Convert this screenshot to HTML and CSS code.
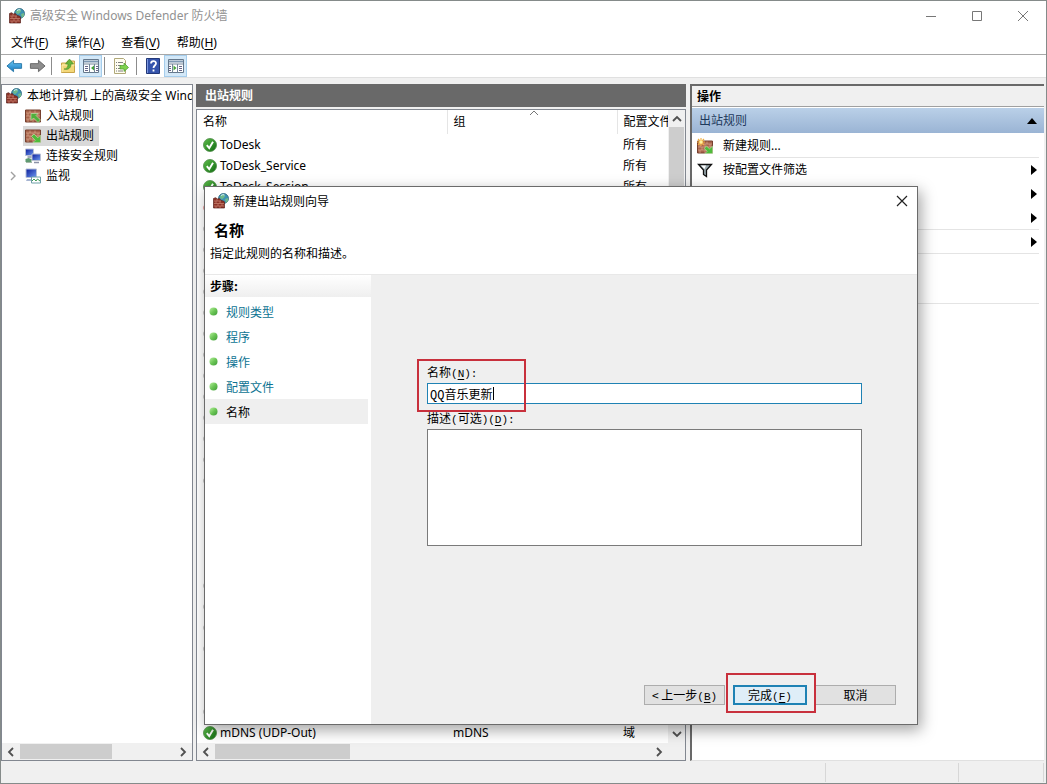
FILE: index.html
```html
<!DOCTYPE html>
<html lang="zh-CN">
<head>
<meta charset="utf-8">
<title>高级安全 Windows Defender 防火墙</title>
<link rel="stylesheet" href="styles.css">
</head>
<body>
<svg class="defs" aria-hidden="true">
  <defs>
    <linearGradient id="gBall" x1="0" y1="0" x2="1" y2="1"><stop offset="0" stop-color="#b8f0a0"/><stop offset=".5" stop-color="#6cc656"/><stop offset="1" stop-color="#3f9a38"/></linearGradient>
    <linearGradient id="gOk" x1="0" y1="0" x2="1" y2="1"><stop offset="0" stop-color="#5fbf4c"/><stop offset="1" stop-color="#0f6a10"/></linearGradient>
    <linearGradient id="gBlue" x1="0" y1="0" x2="0" y2="1"><stop offset="0" stop-color="#6cc8f4"/><stop offset="1" stop-color="#1277c0"/></linearGradient>
    <linearGradient id="gScreen" x1="0" y1="0" x2="1" y2="1"><stop offset="0" stop-color="#0a1a9a"/><stop offset="1" stop-color="#6f9cf0"/></linearGradient>
  </defs>
  <symbol id="fw" viewBox="0 0 16 16">
    <circle cx="10.500" cy="5.500" r="5" fill="#3e93b4" stroke="#2c6478" stroke-width=".8"/>
    <path d="M7 3q2-2 4-1.600l1 2-2.500 2.600-2-.5zM12 6l3-1v3l-2 2z" fill="#6fb98a"/>
    <path d="M8 2.500q2-1.500 3.500-.5" stroke="#d5f2fa" fill="none"/>
    <path d="M.5 5.500l2-.8 2 1.300 2-.4 1.500 1.900 2.500.5 1 1V15H.5z" fill="#8c3227" stroke="#59231c" stroke-width=".7"/>
    <path d="M1 8h7M1 10.500h10M1 13h10M4 6v2M7 8v2.500M3 8v2.500M5 10.500V13M9 10.500V13M3 13v2M7 13v2" stroke="#c98573" stroke-width=".7"/>
  </symbol>
  <symbol id="wall" viewBox="0 0 16 14">
    <path d="M.5 1h15v12H.5z" fill="#a8644c" stroke="#76402f"/>
    <path d="M1 4h14M1 7h14M1 10h14M5 1.500v2.500M10 1.500v2.500M3 4v3M8 4v3M13 4v3M5 7v3M10 7v3M3 10v3M8 10v3" stroke="#d8a88c" stroke-width=".7"/>
  </symbol>
  <symbol id="in" viewBox="0 0 16 14"><use href="#wall"/><path d="M6 4.500h7l-2 2 4.500 4.500-2.500 2.500-4.500-4.500-2.500 2.500z" fill="#4fae3b" stroke="#c9eab6" stroke-width=".6"/></symbol>
  <symbol id="out" viewBox="0 0 16 14"><use href="#wall"/><path d="M15.500 13.500h-7.500l2.200-2.200L6.500 7.500 9 5l3.900 3.800 2.600-2.600z" fill="#4fbb3b" stroke="#c9eab6" stroke-width=".6"/></symbol>
  <symbol id="new" viewBox="0 0 16 16"><use href="#wall" y="2" width="16" height="14"/><path d="M15.500 15.500h-7.500l2.200-2.200-3-2.800L9.500 8l3 2.800 3-2.600z" fill="#4fbb3b" stroke="#c9eab6" stroke-width=".6"/><path d="M4 0v8M0 4h8M1 1l6 6M7 1L1 7" stroke="#f0b040" stroke-width="1.100"/><circle cx="4" cy="4" r="1.700" fill="#fff2a0"/></symbol>
  <symbol id="conn" viewBox="0 0 16 16">
    <path d="M.5 1h8v6.500h-8z" fill="url(#gScreen)" stroke="#b8c0d4"/><path d="M7 6h8.500v6.500H7z" fill="url(#gScreen)" stroke="#b8c0d4"/>
    <path d="M2.500 9h4M9 14.500h5" stroke="#8b92a8" stroke-width="1.500"/><path d="M.5 14v-3l3-1 3 1v3z" fill="#5f9a70"/><path d="M1 14.500h6" stroke="#a3b8a8"/>
  </symbol>
  <symbol id="mon" viewBox="0 0 16 16">
    <path d="M1 1h10.500v8.500H1z" fill="url(#gScreen)" stroke="#b4bfd8"/><path d="M2 11h6v2H1z" fill="#a7b5d2"/>
    <path d="M6.500 9h9v6h-9z" fill="#fff" stroke="#6fa0a8"/><path d="M7 13l2-2 2 2 1.500-2 2.500 2" stroke="#3f9a58" fill="none"/>
  </symbol>
  <symbol id="ok" viewBox="0 0 14 14"><circle cx="7" cy="7" r="6.500" fill="url(#gOk)" stroke="#4d8b46" stroke-width=".8"/><path d="M3.800 7.200l2.400 3 3.800-6.500" fill="none" stroke="#fff" stroke-width="1.900"/></symbol>
  <symbol id="off" viewBox="0 0 14 14"><circle cx="7" cy="7" r="6.500" fill="#8b8b8b"/></symbol>
  <symbol id="block" viewBox="0 0 14 14"><circle cx="7" cy="7" r="6.500" fill="#d23a3a"/></symbol>
  <symbol id="ball" viewBox="0 0 9 9"><circle cx="4.500" cy="4.500" r="4" fill="url(#gBall)"/></symbol>
  <symbol id="l" viewBox="0 0 8 10"><path d="M6 1L2 5l4 4" fill="none" stroke="#505050" stroke-width="1.800"/></symbol>
  <symbol id="r" viewBox="0 0 8 10"><path d="M2 1l4 4-4 4" fill="none" stroke="#505050" stroke-width="1.800"/></symbol>
  <symbol id="u" viewBox="0 0 10 8"><path d="M1 6l4-4 4 4" fill="none" stroke="#505050" stroke-width="1.800"/></symbol>
  <symbol id="d" viewBox="0 0 10 8"><path d="M1 2l4 4 4-4" fill="none" stroke="#505050" stroke-width="1.800"/></symbol>
  <symbol id="tri" viewBox="0 0 6 10"><path d="M0 0l6 5-6 5z" fill="#000"/></symbol>
</svg>

<div class="window">
  <header class="titlebar">
    <svg class="i16"><use href="#fw"/></svg>
    <h1 class="title">高级安全 Windows Defender 防火墙</h1>
    <div class="winbtns">
      <button aria-label="最小化"><svg width="12" height="12"><path d="M1 6.500h10" stroke="#777"/></svg></button>
      <button aria-label="最大化"><svg width="12" height="12"><path d="M1.500 1.500h9v9h-9z" fill="none" stroke="#777"/></svg></button>
      <button aria-label="关闭"><svg width="12" height="12"><path d="M1 1l10 10M11 1L1 11" stroke="#777"/></svg></button>
    </div>
  </header>
  <nav class="menubar">
    <button>文件(<u>F</u>)</button><button>操作(<u>A</u>)</button><button>查看(<u>V</u>)</button><button>帮助(<u>H</u>)</button>
  </nav>
  <div class="toolbar">
    <button aria-label="后退"><svg width="17" height="16" viewBox="0 0 18 16"><path d="M1 8l7-6v3.500h8.500v5H8V14z" fill="url(#gBlue)" stroke="#2878a8"/></svg></button>
    <button aria-label="前进"><svg width="17" height="16" viewBox="0 0 18 16"><path d="M17 8l-7-6v3.500H1.500v5H10V14z" fill="#8d8d8d" stroke="#666"/></svg></button>
    <i class="sep"></i>
    <button aria-label="上一级"><svg width="16" height="16" viewBox="0 0 16 16"><path d="M1.500 5h5l1-2h7v11.500h-13z" fill="#f3d778" stroke="#c8a448"/><path d="M2 14V7h12.500" stroke="#fff0b0" fill="none"/><path d="M4 11c3 0 4-2 4-5H5.500L9.500 1l4 5H11c0 4-3 6.500-7 5z" fill="#68b53c" stroke="#478c26" stroke-width=".6"/></svg></button>
    <button class="on" aria-label="显示控制台树"><svg width="16" height="14" viewBox="0 0 16 14"><path d="M.5.500h15v13H.5z" fill="#fff" stroke="#65788c"/><path d="M1 2.500h14" stroke="#7d98b3" stroke-width="2"/><path d="M1 5h14M6.500 5v8.500M11.500 5v8.500" stroke="#75879a"/><path d="M2 7.500h3M2 9.500h3M2 11.500h3M13 7.500h2M13 9.500h2M13 11.500h2" stroke="#668"/><path d="M11 6.500v5l-3-2.500z" fill="#43a338"/></svg></button>
    <i class="sep"></i>
    <button aria-label="导出列表"><svg width="16" height="16" viewBox="0 0 16 16"><path d="M1.500.500h9l2 2v13h-11z" fill="#fffdf0" stroke="#b0a878"/><path d="M3 4.500h1M3 7.500h1M3 10.500h1M3 13h1M5 4.500h5M5 7.500h3M5 10.500h3M5 13h5" stroke="#808080"/><path d="M7 7.500h4V5l4.500 4.500L11 13.500V11H7z" fill="#7fd24d" stroke="#4a9b2f" stroke-width=".7"/></svg></button>
    <i class="sep wide"></i>
    <button aria-label="帮助"><svg width="14" height="16" viewBox="0 0 14 16"><path d="M.5.500h13v15H.5z" fill="#3554ac" stroke="#223878"/><path d="M1.500 1v14" stroke="#7d98df"/><path d="M5 5.500c0-3.200 5-3.200 5-.2C10 7.500 7.500 7.500 7.500 10M7.500 11.500v2" fill="none" stroke="#fff" stroke-width="1.800"/></svg></button>
    <button class="on" aria-label="显示操作窗格"><svg width="16" height="14" viewBox="0 0 16 14"><path d="M.5.500h15v13H.5z" fill="#fff" stroke="#65788c"/><path d="M1 2.500h14" stroke="#7d98b3" stroke-width="2"/><path d="M1 5h14M4.500 5v8.500M9.500 5v8.500" stroke="#75879a"/><path d="M1 7.500h2M1 9.500h2M1 11.500h2M11 7.500h3M11 9.500h3M11 11.500h3" stroke="#668"/><path d="M5.500 6.500v5l3-2.500z" fill="#43a338"/></svg></button>
  </div>

  <main class="panes">
    <section class="pane tree">
      <ul class="nodes">
        <li class="root"><svg class="i16"><use href="#fw"/></svg><span>本地计算机 上的高级安全 Windows Defender</span></li>
        <li><svg class="i16"><use href="#in"/></svg><span>入站规则</span></li>
        <li class="sel"><svg class="i16"><use href="#out"/></svg><span>出站规则</span></li>
        <li><svg class="i16"><use href="#conn"/></svg><span>连接安全规则</span></li>
        <li class="exp"><svg class="chev" width="6" height="10" viewBox="0 0 6 10"><path d="M1 1l4 4-4 4" fill="none" stroke="#a0a0a0" stroke-width="1.400"/></svg><svg class="i16"><use href="#mon"/></svg><span>监视</span></li>
      </ul>
      <div class="hbar"><svg class="arr"><use href="#l"/></svg><div class="track"><i class="thumb t1"></i></div><svg class="arr"><use href="#r"/></svg></div>
    </section>

    <section class="mid">
      <h2 class="caption">出站规则</h2>
      <div class="pane list">
        <div class="listrow">
          <div class="clip">
            <table>
              <thead><tr><th class="c1">名称</th><th class="c2">组<svg class="sort" width="10" height="6"><path d="M1 5l4-4 4 4" fill="none" stroke="#777"/></svg></th><th class="c3">配置文件</th></tr></thead>
              <tbody>
                <tr><td><svg class="i14"><use href="#ok"/></svg>ToDesk</td><td></td><td>所有</td></tr>
                <tr><td><svg class="i14"><use href="#ok"/></svg>ToDesk_Service</td><td></td><td>所有</td></tr>
                <tr><td><svg class="i14"><use href="#ok"/></svg>ToDesk_Session</td><td></td><td>所有</td></tr>
                <tr><td><svg class="i14"><use href="#block"/></svg></td><td></td><td></td></tr>
                <tr><td><svg class="i14"><use href="#off"/></svg></td><td></td><td></td></tr>
                <tr><td><svg class="i14"><use href="#off"/></svg></td><td></td><td></td></tr>
                <tr><td><svg class="i14"><use href="#off"/></svg></td><td></td><td></td></tr>
                <tr><td><svg class="i14"><use href="#off"/></svg></td><td></td><td></td></tr>
                <tr><td><svg class="i14"><use href="#off"/></svg></td><td></td><td></td></tr>
                <tr><td><svg class="i14"><use href="#off"/></svg></td><td></td><td></td></tr>
                <tr><td><svg class="i14"><use href="#off"/></svg></td><td></td><td></td></tr>
                <tr><td><svg class="i14"><use href="#off"/></svg></td><td></td><td></td></tr>
                <tr><td><svg class="i14"><use href="#off"/></svg></td><td></td><td></td></tr>
                <tr><td><svg class="i14"><use href="#off"/></svg></td><td></td><td></td></tr>
                <tr><td><svg class="i14"><use href="#off"/></svg></td><td></td><td></td></tr>
                <tr><td><svg class="i14"><use href="#off"/></svg></td><td></td><td></td></tr>
                <tr><td><svg class="i14"><use href="#off"/></svg></td><td></td><td></td></tr>
                <tr><td></td><td></td><td></td></tr>
                <tr><td></td><td></td><td></td></tr>
                <tr><td></td><td></td><td></td></tr>
                <tr><td></td><td></td><td></td></tr>
                <tr><td><svg class="i14"><use href="#off"/></svg></td><td></td><td></td></tr>
                <tr><td><svg class="i14"><use href="#off"/></svg></td><td></td><td></td></tr>
                <tr><td><svg class="i14"><use href="#off"/></svg></td><td></td><td></td></tr>
                <tr><td><svg class="i14"><use href="#off"/></svg></td><td></td><td></td></tr>
                <tr><td></td><td></td><td></td></tr>
                <tr><td></td><td></td><td></td></tr>
                <tr><td><svg class="i14"><use href="#off"/></svg></td><td></td><td></td></tr>
                <tr><td><svg class="i14"><use href="#ok"/></svg>mDNS (UDP-Out)</td><td>mDNS</td><td>域</td></tr>
              </tbody>
            </table>
          </div>
          <div class="vbar"><svg class="arrv"><use href="#u"/></svg><i class="vthumb"></i><svg class="arrv"><use href="#d"/></svg></div>
        </div>
        <div class="hbar corner"><svg class="arr"><use href="#l"/></svg><div class="track"><i class="thumb t2"></i></div><svg class="arr"><use href="#r"/></svg></div>
      </div>
    </section>

    <aside class="actions">
      <h2 class="ahead">操作</h2>
      <div class="agroup"><span>出站规则</span><svg width="10" height="6"><path d="M0 6l5-6 5 6z"/></svg></div>
      <ul class="alist">
        <li class="line"><svg class="i16"><use href="#new"/></svg><span>新建规则...</span></li>
        <li><svg class="i16" viewBox="0 0 16 16"><path d="M1.500 2.500h13L9.500 8v6.500l-3-2V8z" fill="#9aaab0" stroke="#111" stroke-width="1.300"/><path d="M4 3.500h5L7.500 7z" fill="#fff"/></svg><span>按配置文件筛选</span><svg class="tri"><use href="#tri"/></svg></li>
        <li><svg class="tri"><use href="#tri"/></svg></li>
        <li class="line"><svg class="tri"><use href="#tri"/></svg></li>
        <li class="line full"><svg class="tri"><use href="#tri"/></svg></li>
        <li class="line full"></li>
      </ul>
    </aside>
  </main>
  <footer class="status"><span></span><span class="s2"></span><span class="s3"></span></footer>

  <div class="dialog" role="dialog" aria-labelledby="dt">
    <div class="dtitle"><svg class="i16"><use href="#fw"/></svg><span id="dt">新建出站规则向导</span>
      <button class="dclose" aria-label="关闭"><svg width="12" height="12"><path d="M1 1l10 10M11 1L1 11" stroke="#222" stroke-width="1.200"/></svg></button></div>
    <div class="dhead"><h2>名称</h2><p>指定此规则的名称和描述。</p></div>
    <div class="dbody">
      <nav class="steps">
        <h3>步骤:</h3>
        <ul>
          <li><svg class="ball"><use href="#ball"/></svg><a href="#">规则类型</a></li>
          <li><svg class="ball"><use href="#ball"/></svg><a href="#">程序</a></li>
          <li><svg class="ball"><use href="#ball"/></svg><a href="#">操作</a></li>
          <li><svg class="ball"><use href="#ball"/></svg><a href="#">配置文件</a></li>
          <li class="cur"><svg class="ball"><use href="#ball"/></svg><span>名称</span></li>
        </ul>
      </nav>
      <form class="form">
        <div class="fields">
          <div class="field">
            <label for="n">名称<span class="mono">(<u>N</u>):</span></label>
            <div class="inwrap"><input id="n" type="text" value="QQ音乐更新"><i class="caret"></i></div>
            <i class="mark m1"></i>
          </div>
          <div class="field">
            <label for="ds">描述<span class="mono">(</span>可选<span class="mono">)(<u>D</u>):</span></label>
            <textarea id="ds"></textarea>
          </div>
        </div>
        <div class="btns">
          <button type="button" class="b">&lt; 上一步<span class="mono">(<u>B</u>)</span></button>
          <div class="okwrap"><button type="button" class="b def">完成<span class="mono">(<u>F</u>)</span></button><i class="mark m2"></i></div>
          <button type="button" class="b">取消</button>
        </div>
      </form>
    </div>
  </div>
</div>
</body>
</html>
```

FILE: styles.css
```css
* { box-sizing: border-box; }
body { margin: 0; font: 12px/20px "Noto Sans", "Noto Sans CJK SC", sans-serif; color: #000; }
h1, h2, h3, p, ul { margin: 0; padding: 0; font-size: 12px; font-weight: 400; }
ul { list-style: none; }
svg { display: block; flex: none; }
button { font: inherit; color: inherit; border: 0; padding: 0; background: none; }
i { display: block; }
u { text-underline-offset: 2px; }
.defs { position: absolute; width: 0; height: 0; }
.i16 { width: 16px; height: 16px; }
.i14 { width: 14px; height: 14px; }

.window { position: relative; height: 100vh; min-height: 600px; display: flex; flex-direction: column; border: 1px solid #858b8a; background: #f0f0f0; overflow: hidden; }
.titlebar { display: flex; align-items: center; height: 30px; padding-left: 8px; gap: 5px; background: #fff; }
.title { flex: 1; color: #929292; }
.winbtns { display: flex; }
.winbtns button { width: 46px; height: 30px; display: flex; justify-content: center; align-items: center; }
.menubar { display: flex; gap: 17px; height: 24px; padding: 0 10px; align-items: center; background: #fff; border-bottom: 1px solid #a8a8a8; }
.toolbar { display: flex; align-items: center; height: 23px; padding-left: 2px; background: #fff; border-bottom: 1px solid #e0e0e0; }
.toolbar button { display: flex; align-items: center; justify-content: center; width: 23px; height: 22px; }
.toolbar .on { background: #d3e8f8; border: 1px solid #a5cdec; }
.sep { width: 1px; height: 18px; background: #8c8c8c; margin: 0 4px 0 2px; }
.toolbar .wide { margin: 0 4px; }

.panes { flex: 1; min-height: 0; display: grid; grid-template-columns: 192px minmax(0, 1fr) 355px; gap: 3px; padding: 6px 2px 0 0; }
.pane { border: 1px solid #828790; background: #fff; display: flex; flex-direction: column; min-height: 0; overflow: hidden; }
.nodes { flex: 1; overflow: hidden; padding-top: 1px; }
.nodes li { display: flex; align-items: center; gap: 5px; height: 20px; padding-left: 23px; white-space: nowrap; }
.nodes .root { padding-left: 4px; }
.root span { min-width: 0; overflow: hidden; }
.nodes .sel { width: 76px; background: #d9d9d9; margin-left: 21px; padding-left: 2px; }
.nodes .exp { padding-left: 8px; gap: 9px; }
.exp span { margin-left: -4px; }
.hbar { display: flex; align-items: center; height: 17px; padding: 0 5px; background: #f0f0f0; }
.corner { padding-right: 22px; }
.arr { width: 8px; height: 10px; }
.track { flex: 1; margin: 0 5px; }
.thumb { height: 15px; background: #cdcdcd; }
.t1 { width: 60%; }
.t2 { width: 31%; }

.mid { display: flex; flex-direction: column; min-height: 0; min-width: 0; }
.caption { height: 23px; line-height: 23px; padding-left: 9px; margin-bottom: 2px; color: #fff; font-weight: 700; background: #696969; }
.list { flex: 1; }
.listrow { flex: 1; min-height: 0; display: flex; }
.clip { flex: 1; min-width: 0; overflow: hidden; }
table { border-collapse: collapse; table-layout: fixed; width: 520px; }
th { position: relative; height: 24px; padding: 0 0 0 6px; text-align: left; font-weight: 400; border-right: 1px solid #e5e5e5; }
.c1 { width: 250px; }
.c2 { width: 170px; }
.sort { position: absolute; left: 81px; top: 0; }
td { height: 21px; padding: 0 0 0 6px; line-height: 20px; white-space: nowrap; }
td .i14 { display: inline-block; vertical-align: -3px; margin-right: 3px; }
.vbar { width: 17px; background: #f0f0f0; display: flex; flex-direction: column; align-items: center; padding: 5px 0; }
.arrv { width: 10px; height: 8px; }
.vthumb { width: 15px; height: 75%; margin: 4px 0 auto; background: #cdcdcd; }

.actions { margin-left: 1px; background: #fff; border: 1px solid #696969; border-width: 2px 0 0 2px; border-bottom: 1px solid #e0e0e0; }
.ahead { height: 21px; line-height: 21px; padding-left: 5px; font-weight: 700; background: #f0f0f0; border-bottom: 1px solid #a0a0a0; }
.agroup { height: 25px; margin-top: 1px; padding: 0 7px; display: flex; align-items: center; justify-content: space-between; color: #1e395b; background: linear-gradient(#bad0e8, #9ab4d4); }
.alist li { position: relative; height: 24px; padding: 0 7px 0 5px; display: flex; align-items: center; gap: 10px; }
.alist .line::after { content: ""; position: absolute; left: 28px; right: 5px; bottom: 0; height: 1px; background: #e4e4e4; }
.alist .full::after { left: 5px; }
.alist li:first-child { height: 25px; }
.alist li:last-child { height: 50px; }
.tri { width: 6px; height: 10px; margin-left: auto; }
.status { height: 22px; display: grid; grid-template-columns: 1fr 133px 85px; padding: 2px 2px 1px 0; }
.status span { border-right: 1px solid #d7d7d7; }

.dialog { position: absolute; left: 203px; right: 128px; top: 185px; bottom: 58px; display: flex; flex-direction: column; background: #fff; border: 1px solid #6b6b6b; box-shadow: 3px 5px 14px rgba(0, 0, 0, .36); font-family: "Noto Sans CJK SC", sans-serif; }
.dtitle { display: flex; align-items: center; gap: 4px; height: 28px; padding: 0 9px 0 8px; }
.dclose { margin-left: auto; }
.dhead { height: 60px; padding: 4px 5px; border-bottom: 1px solid #e8e8e8; }
.dhead h2 { font-size: 15px; font-weight: 700; padding-left: 4px; line-height: 22px; }
.dhead p { line-height: 24px; }
.dbody { flex: 1; display: flex; min-height: 0; }
.steps { width: 166px; }
.steps h3 { height: 22px; font-weight: 700; padding-left: 5px; line-height: 22px; background: linear-gradient(#fff, #efefef); margin-bottom: 2px; }
.steps li { display: flex; align-items: center; gap: 8px; height: 25px; padding-left: 4px; margin-right: 3px; }
.steps .cur { background: #efefef; }
.steps a { color: #0c7392; text-decoration: none; }
.ball { width: 9px; height: 9px; }
.form { flex: 1; background: #efefef; display: flex; flex-direction: column; justify-content: space-between; padding: 87px 21px 19px 56px; }
.fields { padding-right: 34px; }
.field { position: relative; margin-bottom: 3px; }
.field label { display: block; height: 21px; line-height: 20px; }
.mono { font-family: "Liberation Mono", monospace; font-size: 11px; }
.inwrap { position: relative; display: flex; height: 22px; }
input { width: 100%; height: 21px; border: 1px solid #1f82b4; padding: 0 2px; font: 12px/18px "Liberation Mono", "Noto Sans CJK SC", monospace; outline: 0; background: #fff; }
textarea { display: block; width: 100%; height: 117px; border: 1px solid #7a7a7a; resize: none; background: #fff; }
.caret { position: absolute; left: 66px; top: 4px; width: 1px; height: 13px; background: #000; }
.mark { position: absolute; border: 2px solid #c8303c; pointer-events: none; }
.m1 { left: -10px; top: -3px; width: 109px; height: 53px; }
.btns { display: flex; justify-content: flex-end; align-items: center; gap: 8px; }
.b { width: 81px; height: 20px; line-height: 18px; border: 1px solid #adadad; background: #e1e1e1; white-space: nowrap; }
.okwrap { position: relative; display: flex; }
.def { width: 74px; border: 2px solid #1f82b4; background: #dfeef8; line-height: 16px; }
.m2 { left: -7px; right: -9px; top: -12px; bottom: -8px; }
```
